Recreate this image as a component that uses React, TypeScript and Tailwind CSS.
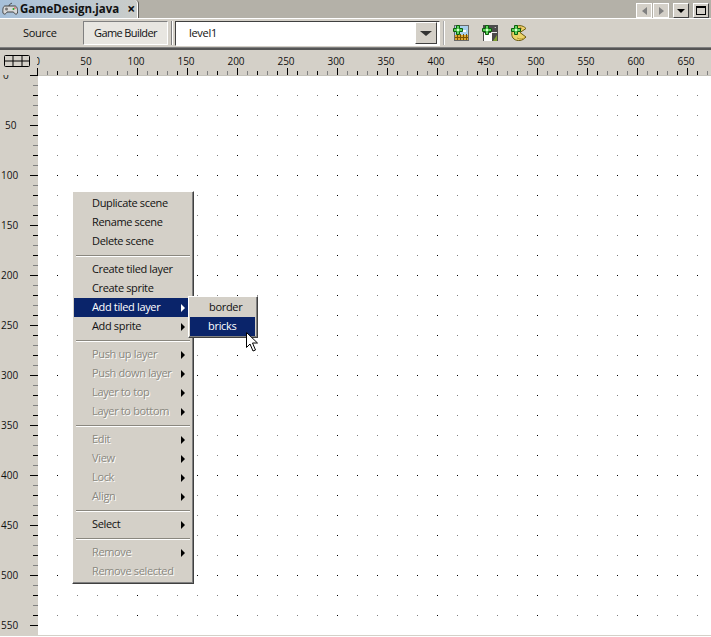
import React from "react";

const F = "[font-family:'Open_Sans','Noto_Sans',sans-serif]";

type It = { t?: string; d?: boolean; a?: boolean; h?: boolean };
const items: It[] = [
  { t: "Duplicate scene" }, { t: "Rename scene" }, { t: "Delete scene" }, {},
  { t: "Create tiled layer" }, { t: "Create sprite" }, { t: "Add tiled layer", a: true, h: true }, { t: "Add sprite", a: true }, {},
  { t: "Push up layer", a: true, d: true }, { t: "Push down layer", a: true, d: true }, { t: "Layer to top", a: true, d: true }, { t: "Layer to bottom", a: true, d: true }, {},
  { t: "Edit", a: true, d: true }, { t: "View", a: true, d: true }, { t: "Lock", a: true, d: true }, { t: "Align", a: true, d: true }, {},
  { t: "Select", a: true }, {},
  { t: "Remove", a: true, d: true }, { t: "Remove selected", d: true },
];

function Row({ it }: { it: It }) {
  if (!it.t) {
    return <div className="h-[9px] flex flex-col justify-center px-[2px]"><div className="h-px bg-[#8a877f]" /><div className="h-px bg-white" /></div>;
  }
  return (
    <div className={`h-[19px] flex items-center pl-[18px] pr-[7px] justify-between text-[11px] tracking-[-0.35px] ${it.h ? "bg-[#0a246a] text-white" : it.d ? "text-[#8a8880] [text-shadow:1px_1px_0_#fff]" : "text-[#111]"}`}>
      <span>{it.t}</span>
      {it.a && <span className={`w-0 h-0 border-y-[4px] border-y-transparent border-l-[4px] ${it.h ? "border-l-white" : "border-l-black"}`} />}
    </div>
  );
}

const panel = "bg-[#d4d0c8] border border-t-white border-l-white border-r-[#404040] border-b-[#404040] shadow-[inset_-1px_-1px_0_#808080]";

function Ruler() {
  const ticks = [];
  for (let i = 0; i <= 67; i++) {
    const x = 37 + i * 10;
    const major = i % 5 === 0;
    const even = i % 2 === 0;
    ticks.push(<line key={i} x1={x + 0.5} x2={x + 0.5} y1={major ? 18 : 21} y2={25} stroke={major || even ? "#000" : "#808080"} />);
    if (major) ticks.push(<text key={"t" + i} x={i === 0 ? 37 : x - 1} y={15} textAnchor="middle" fontSize="10" fill="#111" clipPath="url(#rc)">{i * 10}</text>);
  }
  return (
    <svg width="711" height="25" className={`block ${F}`}>
      <defs><clipPath id="rc"><rect x="37" y="0" width="674" height="25" /></clipPath></defs>
      {ticks}
    </svg>
  );
}

function SideRuler() {
  const ticks = [];
  for (let i = 0; i <= 55; i++) {
    const y = i * 10;
    const major = i % 5 === 0;
    const even = i % 2 === 0;
    ticks.push(<line key={i} y1={y + 0.5} y2={y + 0.5} x1={major ? 30 : 33} x2={38} stroke={major || even ? "#000" : "#808080"} />);
    if (major) ticks.push(<text key={"t" + i} x={i === 0 ? 3 : i * 10 < 100 ? 5 : 1} y={y + 4} fontSize="10" fill="#111">{i * 10}</text>);
  }
  return <svg width="38" height="560" className={`block ${F}`}>{ticks}</svg>;
}

function Dots() {
  const dots = [];
  for (let c = 1; c <= 33; c++) {
    for (let r = 1; r <= 27; r++) {
      const dark = c % 5 === 0 || r % 5 === 0;
      dots.push(<rect key={c + "-" + r} x={c * 20 - 1} y={r * 20} width="1" height="1" fill={dark ? "#000" : "#808080"} />);
    }
  }
  return <svg width="673" height="560" className="block">{dots}</svg>;
}

function Plus() {
  return (
    <g>
      <path d="M3.500.5h3v3h3v3h-3v3h-3v-3h-3v-3h3z" fill="#5fd35f" stroke="#0b5f0b" />
      <path d="M4 4h2v2H4z" fill="#d8ffd0" />
    </g>
  );
}

export default function App() {
  return (
    <div className={`relative w-[711px] h-[637px] overflow-hidden bg-white ${F}`}>
      {/* tab bar */}
      <div className="h-[18px] bg-[#b4b1a8] flex items-stretch">
        <div className="w-[139px] bg-linear-to-r from-[#a6c0da] to-[#cbcdc9] rounded-tr-[4px] border-r border-r-[#55534e] shadow-[inset_-1px_0_0_#fff] flex items-center pl-[2px]">
          <svg width="16" height="14" viewBox="0 0 16 14"><path d="M3 4h10c2 0 3 4 2.500 7-1 2-3 1-4-1H5c-1 2-3 3-4 1C0.500 8 1 4 3 4z" fill="#d8d8d8" stroke="#444" /><circle cx="11.500" cy="7" r="1" fill="#2a2" /><circle cx="13" cy="6" r=".8" fill="#d33" /><circle cx="4.500" cy="7" r="1.500" fill="#777" /><path d="M7 4C7 2 9 2 10 1" fill="none" stroke="#444" /></svg>
          <span className="ml-[2px] text-[11.500px] font-bold text-[#111]">GameDesign.java</span>
          <span className="ml-[8px] text-[14px] font-bold text-[#111] leading-none">×</span>
        </div>
        <div className="ml-auto flex items-end pr-[2px]">
          <div className="w-[16px] h-[15px] bg-[#d4d0c8] border border-white flex items-center justify-center mr-px"><span className="w-0 h-0 border-y-[4px] border-y-transparent border-r-[5px] border-r-[#808080]" /></div>
          <div className="w-[16px] h-[15px] bg-[#d4d0c8] border border-white flex items-center justify-center mr-[4px]"><span className="w-0 h-0 border-y-[4px] border-y-transparent border-l-[5px] border-l-[#808080]" /></div>
          <div className="w-[16px] h-[15px] bg-[#d4d0c8] border border-t-white border-l-white border-r-[#404040] border-b-[#404040] flex items-center justify-center mr-[4px]"><span className="w-0 h-0 border-x-[4px] border-x-transparent border-t-[4px] border-t-black" /></div>
          <div className="w-[16px] h-[15px] bg-[#d4d0c8] border border-t-white border-l-white border-r-[#404040] border-b-[#404040] flex items-center justify-center"><span className="w-[10px] h-[9px] border border-black border-t-2" /></div>
        </div>
      </div>
      {/* toolbar */}
      <div className="h-[29px] bg-[#d4d0c8] border-t border-t-white flex items-center text-[11px] tracking-[-0.3px] text-[#111]">
        <div className="w-[83px] pl-[23px]">Source</div>
        <div className="w-[85px] h-[24px] bg-[#e8e6e1] border border-t-[#808080] border-l-[#808080] border-r-white border-b-white flex items-center justify-center tracking-[-0.6px]">Game Builder</div>
        <div className="w-[2px] h-[24px] ml-[3px] border-l border-l-[#808080] bg-white" />
        <div className="ml-[2px] w-[265px] h-[25px] bg-white border border-[#404040] border-r-white border-b-white flex items-center justify-between pr-[2px]">
          <span className="pl-[13px]">level1</span>
          <span className="w-[22px] h-[22px] bg-[#d4d0c8] border border-t-white border-l-white border-r-[#404040] border-b-[#404040] flex items-center justify-center"><span className="w-0 h-0 border-x-[6px] border-x-transparent border-t-[5px] border-t-[#333]" /></span>
        </div>
        <div className="w-[2px] h-[24px] ml-[3px] bg-white border-l border-l-[#aaa]" />
        <div className="ml-[8px] flex gap-[13px] items-center">
          <svg width="16" height="16" viewBox="0 0 16 16">
            <rect x="1.500" y=".5" width="14" height="15" fill="#a8d0ee" stroke="#6a6a6a" />
            <path d="M8 5h5v2H8z" fill="#fff" />
            <path d="M2 10h13v5H2z" fill="#e0a830" />
            <path d="M4.500 9v6M7.500 9v6M10.500 9v6M13.500 9v6M2 12.500h13" stroke="#7a5200" />
            <Plus />
          </svg>
          <svg width="16" height="16" viewBox="0 0 16 16">
            <rect x="1" y="0" width="15" height="16" fill="#4a4a4a" />
            <path d="M2 8h8v8H2z" fill="#fff" />
            <path d="M9 7h6v1H9zM12 3l2-1v1z" fill="#e8e8e8" />
            <path d="M11 16l4-6v6z" fill="#7fa030" />
            <Plus />
          </svg>
          <svg width="16" height="16" viewBox="0 0 16 16">
            <path d="M3 3C6 -.500 12 0 15 3.500L9 7.500l6 4.500c-3 4-9 4.500-12 2C0 12 0 6 3 3z" fill="#ecd468" stroke="#6b5a12" />
            <path d="M6 13c3 1.500 6 1 8-.500" fill="none" stroke="#b89a30" />
            <circle cx="9.500" cy="3.500" r="1" fill="#a02a10" />
            <Plus />
          </svg>
        </div>
      </div>
      <div className="h-[3px] bg-[#555] border-t border-t-[#808080]" />
      {/* rulers */}
      <div className="relative h-[25px] bg-[#d4d0c8]">
        <Ruler />
        <svg width="28" height="14" viewBox="0 0 28 14" className="absolute left-[4px] top-[5px]"><rect x=".5" y=".5" width="25" height="11" rx="1" fill="none" stroke="#000" /><path d="M0 6h26M9 0v12M18 0v12" stroke="#000" fill="none" /></svg>
      </div>
      <div className="flex h-[560px]">
        <div className="w-[38px] bg-[#d4d0c8]"><SideRuler /></div>
        <div className="flex-1 bg-white border-t border-t-[#c4c2ba]"><div className="-mt-px"><Dots /></div></div>
      </div>
      <div className="h-px bg-[#d4d0c8]" />

      {/* menus */}
      <div className={`absolute left-[72px] top-[191px] w-[122px] pt-[2px] pb-[2px] px-px ${panel}`}>
        {items.map((it, i) => <Row key={i} it={it} />)}
      </div>
      <div className={`absolute left-[188px] top-[296px] w-[70px] p-px ${panel}`}>
        <div className="h-[19px] flex items-center pl-[19px] text-[11px] tracking-[-0.3px] text-[#111]">border</div>
        <div className="h-[19px] flex items-center pl-[18px] mr-px text-[11px] tracking-[-0.3px] text-white bg-[#0a246a]">bricks</div>
      </div>
      <svg width="14" height="20" viewBox="0 0 14 20" className="absolute left-[246px] top-[332px]"><path d="M.5.5v15l3.500-3.500 3 7 2.500-1-3-7h5z" fill="#fff" stroke="#000" /></svg>
    </div>
  );
}
